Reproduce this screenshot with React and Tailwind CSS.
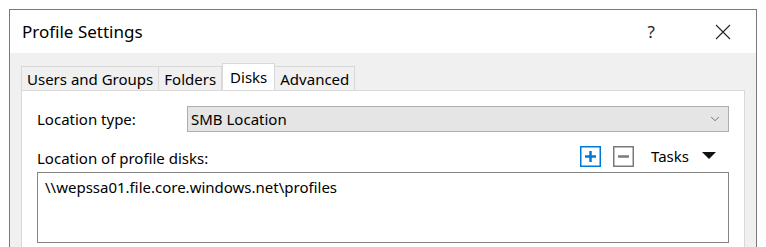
import { ChevronDown } from 'lucide-react'

// Profile Settings dialog — Disks tab

const TABS = ['Users and Groups', 'Folders', 'Disks', 'Advanced']

export default function App() {
  const active = 'Disks'

  return (
    <div
      className="h-[247px] w-[766px] overflow-hidden bg-white pl-[9px] pt-[9px]"
      style={{ fontFamily: '"Segoe UI", "Noto Sans", sans-serif' }}
    >
      <div className="flex h-[260px] w-[748px] flex-col border border-[#7a7a7a] bg-[#f0f0f0]">
        {/* Title bar */}
        <div className="flex h-[43px] shrink-0 items-center bg-white pl-[12px] text-[17px] text-black">
          <span className="leading-none">Profile Settings</span>
          <span className="ml-auto mr-[60px] text-[17px] leading-none text-[#222]">?</span>
          <svg width="16" height="16" viewBox="0 0 16 16" className="mr-[25px]">
            <path d="M1 1 L15 15 M15 1 L1 15" stroke="#222" strokeWidth="1.1" fill="none" />
          </svg>
        </div>

        {/* Tabs */}
        <div className="flex pl-[11px] pt-[13px]">
          {TABS.map((t) => (
            <div
              key={t}
              className={
                t === active
                  ? 'relative z-10 -mb-px -mt-[3px] flex h-[27px] items-start border border-b-0 border-[#d9d9d9] bg-white px-[7px] pt-[2px] text-[15px] text-black'
                  : 'flex h-[24px] items-center border border-b-0 border-[#d9d9d9] px-[5px] pt-px text-[15px] text-black -ml-px first:ml-0'
              }
            >
              {t}
            </div>
          ))}
        </div>

        {/* Panel */}
        <div className="mr-[11px] ml-[11px] flex-1 border border-[#d9d9d9] bg-white pl-[15px] pr-[15px]">
          <div className="mt-[15px] flex items-center">
            <span className="w-[150px] text-[15px] text-black">Location type:</span>
            <div className="flex h-[26px] flex-1 items-center border border-[#adadad] bg-[#e5e5e5] pl-[3px] pr-[6px] text-[15px] text-black">
              <span>SMB Location</span>
              <ChevronDown className="ml-auto h-[14px] w-[14px] text-[#444]" strokeWidth={1.2} />
            </div>
          </div>

          <div className="mt-[13px] flex items-start">
            <span className="mt-[2px] text-[15px] leading-[22px] text-black">Location of profile disks:</span>
            <div className="ml-auto flex items-center">
              <svg width="21" height="21" viewBox="0 0 21 21">
                <rect x="0.75" y="0.75" width="19.5" height="19.5" fill="white" stroke="#0078d7" strokeWidth="1.5" />
                <path d="M10.5 5 V16 M5 10.5 H16" stroke="#0078d7" strokeWidth="2.5" />
              </svg>
              <svg width="21" height="21" viewBox="0 0 21 21" className="ml-[12px]">
                <rect x="0.75" y="0.75" width="19.5" height="19.5" fill="white" stroke="#7a7a7a" strokeWidth="1.5" />
                <path d="M5 10.5 H16" stroke="#7a7a7a" strokeWidth="2.5" />
              </svg>
              <span className="ml-[17px] text-[15px] leading-[22px] text-black">Tasks</span>
              <svg width="14" height="8" viewBox="0 0 14 8" className="ml-[13px] mr-[13px]">
                <path d="M0 0 H14 L7 7 Z" fill="#111" />
              </svg>
            </div>
          </div>

          <div className="mt-[3px] h-[71px] border border-[#858585] px-[7px] pt-[3px] text-[15px] text-black">
            \\wepssa01.file.core.windows.net\profiles
          </div>
        </div>
      </div>
    </div>
  )
}
